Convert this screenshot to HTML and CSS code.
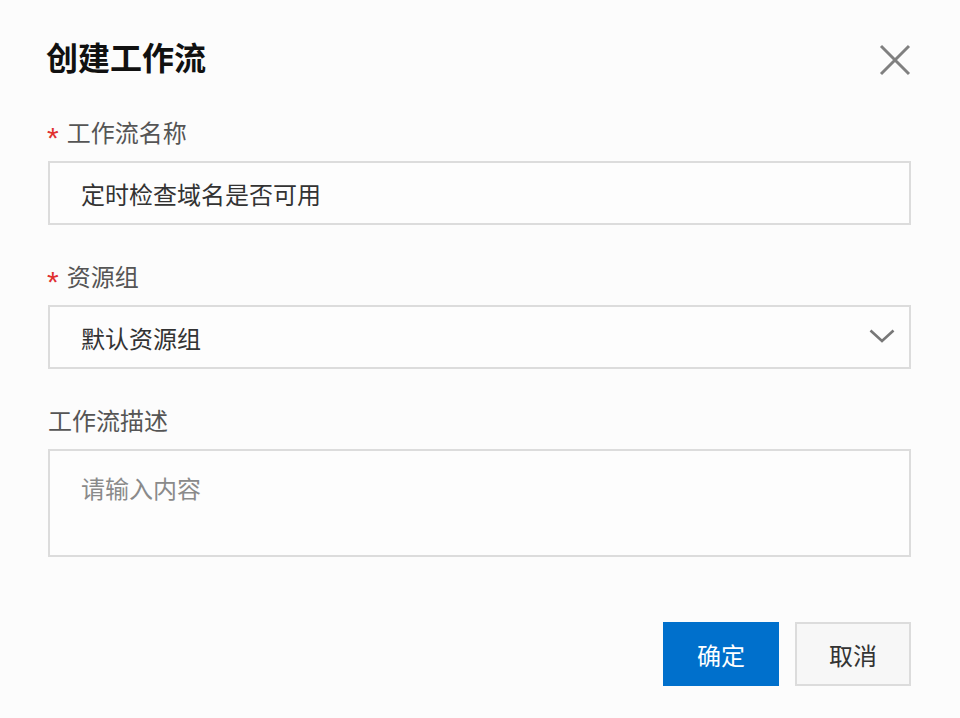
FILE: index.html
```html
<!DOCTYPE html>
<html lang="zh-CN">
<head>
<meta charset="utf-8">
<title>创建工作流</title>
<link rel="stylesheet" href="styles.css">
</head>
<body>
<div class="dialog">
  <div class="header">
    <h1 class="title">创建工作流</h1>
    <button class="close" type="button" aria-label="关闭">
      <svg width="32" height="32" viewBox="0 0 32 32"><path d="M2 2 L30 30 M30 2 L2 30" stroke="#808080" stroke-width="3" fill="none"/></svg>
    </button>
  </div>

  <div class="field">
    <label class="label"><span class="req">*</span>工作流名称</label>
    <div class="control">定时检查域名是否可用</div>
  </div>

  <div class="field">
    <label class="label"><span class="req">*</span>资源组</label>
    <div class="control select">
      <span>默认资源组</span>
      <svg class="chev" width="26" height="14" viewBox="0 0 26 14"><path d="M1.5 1.5 L13 12 L24.5 1.5" stroke="#777" stroke-width="2.6" fill="none"/></svg>
    </div>
  </div>

  <div class="field">
    <label class="label">工作流描述</label>
    <div class="control area"><span class="placeholder">请输入内容</span></div>
  </div>

  <div class="footer">
    <button class="btn primary" type="button">确定</button>
    <button class="btn" type="button">取消</button>
  </div>
</div>
</body>
</html>
```

FILE: styles.css
```css
* { box-sizing: border-box; }
html, body { margin: 0; padding: 0; }
body {
  background: #fcfcfc;
  font-family: "Noto Sans CJK SC", "Noto Sans", sans-serif;
  color: #333;
  width: 960px;
  height: 718px;
  overflow: hidden;
}
.dialog {
  padding: 32px 49px 0 48px;
  display: flex;
  flex-direction: column;
}
.header {
  display: flex;
  align-items: center;
  justify-content: space-between;
  height: 50px;
}
.title {
  margin: -2px 0 0 -2px;
  font-size: 32px;
  font-weight: 700;
  color: #111;
  line-height: 50px;
}
.close {
  background: none;
  border: 0;
  padding: 0;
  width: 32px;
  height: 32px;
  display: flex;
  margin-top: 6px;
}
.field {
  display: flex;
  flex-direction: column;
}
.field + .field { margin-top: 33px; }
.header + .field { margin-top: 32px; }
.label {
  font-size: 24px;
  line-height: 40px;
  height: 40px;
  color: #555;
  margin-bottom: 9px;
  display: flex;
  align-items: center;
  margin-top: -2px;
}
.req {
  color: #e03030;
  margin-right: 8px;
  font-family: "Liberation Sans", sans-serif;
  font-size: 30px;
  line-height: 1;
  padding-top: 12px;
  margin-left: -1px;
}
.control {
  height: 64px;
  border: 2px solid #dcdcdc;
  background: #fdfdfd;
  padding: 0 32px 0 31px;
  font-size: 24px;
  color: #333;
  display: flex;
  align-items: center;
}
.select { justify-content: space-between; padding-right: 14px; }
.chev { margin-top: -2px; }
.area {
  height: 108px;
  align-items: flex-start;
  padding-top: 21px;
  line-height: 40px;
}
.placeholder { color: #8a8a8a; line-height: 40px; margin-top: -4px; }
.footer {
  display: flex;
  justify-content: flex-end;
  gap: 16px;
  margin-top: 65px;
}
.btn {
  width: 116px;
  height: 64px;
  border: 2px solid #dcdcdc;
  background: #f7f7f7;
  color: #333;
  font-family: inherit;
  font-size: 24px;
  padding: 0;
}
.btn.primary {
  background: #0070cc;
  border-color: #0070cc;
  color: #fff;
}
```
